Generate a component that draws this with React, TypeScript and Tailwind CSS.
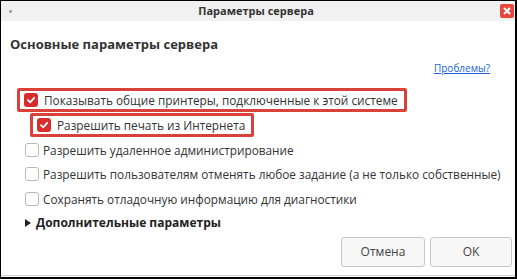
import { useState } from 'react';

type Opt = { label: string; checked: boolean; boxed?: boolean; indent?: boolean; h: string };

const initial: Opt[] = [
    { label: 'Показывать общие принтеры, подключенные к этой системе', checked: true, boxed: true, h: 'h-[25px]' },
    { label: 'Разрешить печать из Интернета', checked: true, boxed: true, indent: true, h: 'h-[25px]' },
    { label: 'Разрешить удаленное администрирование', checked: false, h: 'h-[24px]' },
    { label: 'Разрешить пользователям отменять любое задание (а не только собственные)', checked: false, h: 'h-[25px]' },
    { label: 'Сохранять отладочную информацию для диагностики', checked: false, h: 'h-[24px]' },
];

function Check({ on }: { on: boolean }) {
    return on ? (
        <span className="w-[14px] h-[14px] rounded-[3px] bg-[#d92d2d] flex items-center justify-center shrink-0">
            <svg width="10" height="10" viewBox="0 0 10 10">
                <path d="M2 5.2 L4.2 7.3 L8.2 2.8" fill="none" stroke="white" strokeWidth="1.8" strokeLinecap="round" strokeLinejoin="round" />
            </svg>
        </span>
    ) : (
        <span className="w-[14px] h-[14px] rounded-[3px] border border-[#b8b8b8] bg-white shrink-0" />
    );
}

export default function App() {
    const [opts, setOpts] = useState(initial);
    // переключение флажка
    const toggle = (i: number) => setOpts((prev) => prev.map((o, j) => (j === i ? { ...o, checked: !o.checked } : o)));

    return (
        <div className="w-[517px] h-[279px] border border-black border-r-2 border-b-2 bg-white flex flex-col font-['Open_Sans',sans-serif] text-[#333]">
            {/* заголовок окна */}
            <div className="h-[20px] bg-[#f1f1f1] flex items-center pl-[8px] pr-[1px]">
                <span className="w-[3px] h-[3px] rounded-full bg-[#999]" />
                <span className="flex-1 text-center text-[11px] font-bold text-[#333]">Параметры сервера</span>
                <span className="w-[14px] h-[14px] bg-[#e8483c] rounded-[2px] flex items-center justify-center">
                    <svg width="10" height="10" viewBox="0 0 10 10">
                        <path d="M2 2 L8 8 M8 2 L2 8" stroke="white" strokeWidth="2" />
                    </svg>
                </span>
            </div>

            <div className="flex-1 flex flex-col pl-[9px] pr-[3px]">
                <h2 className="text-[13px] font-bold text-[#333] mt-[14px] leading-[18px]">Основные параметры сервера</h2>
                <div className="flex justify-end pr-[22px] mt-[8px]">
                    <a href="#" className="text-[10px] text-[#1a5fd8] underline leading-[14px]">Проблемы?</a>
                </div>

                <div className="flex flex-col mt-[13px]">
                    {opts.map((o, i) => (
                        <div key={i} className={`flex items-start ${o.indent ? 'pl-[20px]' : o.boxed ? 'pl-[7px]' : 'pl-[15px]'} ${o.h}`}>
                            <button
                                onClick={() => toggle(i)}
                                className={`flex items-center whitespace-nowrap text-[11.8px] leading-[17px] ${o.boxed ? 'gap-[6px] border-[3px] border-[#d9413b] rounded-[2px] pl-[4px] pr-[6px] h-[24px]' : 'gap-[4px] h-[24px]'}`}
                            >
                                <Check on={o.checked} />
                                <span>{o.label}</span>
                            </button>
                        </div>
                    ))}
                </div>

                <div className="flex items-center gap-[5px] pl-[15px] h-[24px]">
                    <svg width="6" height="8" viewBox="0 0 6 8">
                        <path d="M0 0 L6 4 L0 8 Z" fill="#222" />
                    </svg>
                    <span className="text-[12px] font-bold text-[#222]">Дополнительные параметры</span>
                </div>

                <div className="flex justify-end gap-[5px] mt-auto mb-[8px]">
                    <button className="w-[84px] h-[30px] border border-[#c8c8c8] rounded-[3px] bg-[#f7f7f7] text-[12px] text-[#444]">Отмена</button>
                    <button className="w-[82px] h-[30px] border border-[#c8c8c8] rounded-[3px] bg-[#f7f7f7] text-[12px] text-[#444]">OK</button>
                </div>
            </div>
            <div className="h-[1px] bg-[#cfcfcf] mb-[1px]" />
        </div>
    );
}
